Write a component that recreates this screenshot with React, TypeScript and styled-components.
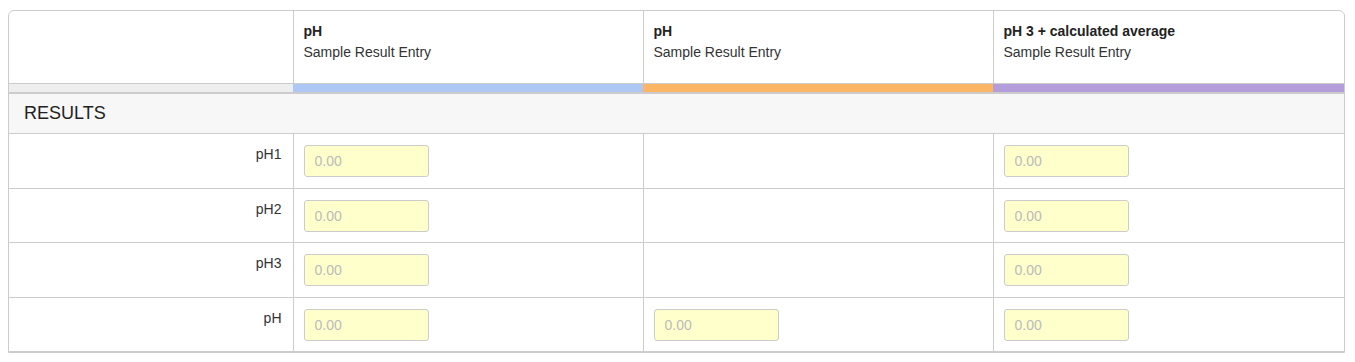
import styled, { createGlobalStyle } from "styled-components";

interface Column {
  title: string;
  subtitle: string;
  band: string;
}

interface Row {
  label: string;
  cells: boolean[];
}

const columns: Column[] = [
  { title: "pH", subtitle: "Sample Result Entry", band: "#aec8f5" },
  { title: "pH", subtitle: "Sample Result Entry", band: "#fbb565" },
  { title: "pH 3 + calculated average", subtitle: "Sample Result Entry", band: "#b49ddb" },
];

const rows: Row[] = [
  { label: "pH1", cells: [true, false, true] },
  { label: "pH2", cells: [true, false, true] },
  { label: "pH3", cells: [true, false, true] },
  { label: "pH", cells: [true, true, true] },
];

const GlobalStyle = createGlobalStyle`
  body {
    margin: 0;
    background: #fff;
    font-family: "Liberation Sans", Arial, sans-serif;
    font-size: 14px;
    color: #333;
  }
`;

const Page = styled.div`
  padding: 10px 10px 0 8px;
`;

const Panel = styled.div`
  border: 1px solid #ccc;
  border-radius: 6px 6px 0 0;
  overflow: hidden;
`;

const Table = styled.table`
  width: 100%;
  border-collapse: collapse;
  table-layout: fixed;
`;

const HeadCell = styled.th`
  height: 52px;
  padding: 10px;
  text-align: left;
  vertical-align: top;
  font-weight: normal;
  line-height: 21px;
  border-left: 1px solid #ccc;
  border-bottom: 1px solid #ccc;

  &:first-child {
    border-left: none;
  }
`;

const Title = styled.div`
  font-weight: bold;
  color: #222;
`;

const BandCell = styled.td<{ $color: string }>`
  height: 8px;
  padding: 0;
  background: ${(p) => p.$color};
  border-bottom: 2px solid #ccc;
`;

const SectionCell = styled.td`
  height: 39px;
  padding: 0 15px;
  background: #f7f7f7;
  font-size: 18px;
  color: #222;
  border-bottom: 1px solid #ccc;
`;

const LabelCell = styled.td`
  height: 33.5px;
  padding: 10px 11px 10px 10px;
  text-align: right;
  vertical-align: top;
  line-height: 20px;
  border-bottom: 1px solid #ccc;
`;

const ValueCell = styled.td`
  height: 33.5px;
  padding: 11px 10px 9px;
  vertical-align: top;
  border-left: 1px solid #ccc;
  border-bottom: 1px solid #ccc;
`;

const ValueInput = styled.input`
  display: block;
  box-sizing: border-box;
  width: 125px;
  height: 32px;
  padding: 0 10px;
  border: 1px solid #ccc;
  border-radius: 3px;
  background: #ffffcc;
  font-family: inherit;
  font-size: 14px;
  color: #333;

  &::placeholder {
    color: #bbb;
  }
`;

export default function App() {
  return (
    <Page>
      <GlobalStyle />
      <Panel>
        <Table>
          <colgroup>
            <col style={{ width: 284 }} />
            <col style={{ width: 350 }} />
            <col style={{ width: 350 }} />
            <col />
          </colgroup>
          <thead>
            <tr>
              <HeadCell />
              {columns.map((c, i) => (
                <HeadCell key={i}>
                  <Title>{c.title}</Title>
                  <div>{c.subtitle}</div>
                </HeadCell>
              ))}
            </tr>
            <tr>
              <BandCell $color="#eeeeee" />
              {columns.map((c, i) => (
                <BandCell key={i} $color={c.band} />
              ))}
            </tr>
          </thead>
          <tbody>
            <tr>
              <SectionCell colSpan={4}>RESULTS</SectionCell>
            </tr>
            {rows.map((r) => (
              <tr key={r.label + r.cells.join()}>
                <LabelCell>{r.label}</LabelCell>
                {r.cells.map((has, i) => (
                  <ValueCell key={i}>
                    {has && <ValueInput placeholder="0.00" />}
                  </ValueCell>
                ))}
              </tr>
            ))}
          </tbody>
        </Table>
      </Panel>
    </Page>
  );
}
